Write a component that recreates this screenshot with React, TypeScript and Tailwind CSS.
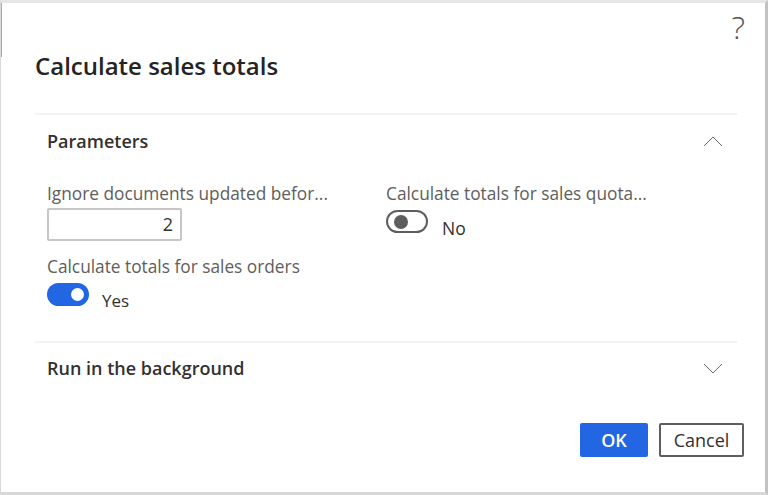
const font = "font-['Open_Sans','Noto_Sans',sans-serif]";

function Toggle({ on }: { on: boolean }) {
  return on ? (
    <span className="flex h-[23px] w-[42px] items-center justify-end rounded-full bg-[#2266e3] pr-[5px]">
      <span className="h-[13px] w-[13px] rounded-full bg-white" />
    </span>
  ) : (
    <span className="flex h-[23px] w-[42px] items-center rounded-full border-2 border-[#605e5c] pl-[6px]">
      <span className="h-[14px] w-[14px] rounded-full bg-[#605e5c]" />
    </span>
  );
}

function Chevron({ up }: { up?: boolean }) {
  return (
    <svg width="20" height="12" viewBox="0 0 20 12" fill="none" className="mr-[14px]">
      <path d={up ? "M1 11 L10 2 L19 11" : "M1 1 L10 10 L19 1"} stroke="#6b6a68" strokeWidth="1" />
    </svg>
  );
}

export default function App() {
  return (
    <div
      className={`relative h-[495px] w-[768px] overflow-hidden border-t-[3px] border-r-[3px] border-b-[3px] border-l border-t-[#e6e6e6] border-r-[#c2c2c2] border-b-[#d8d8d8] border-l-[#d9d9d9] bg-white ${font}`}
    >
      {/* window edges behind the dialog */}
      <div className="absolute left-[-1px] top-0 h-[54px] w-[2px] bg-[#a3abbb]" />
      <div className="absolute bottom-[-3px] left-[613px] h-[3px] w-[154px] bg-[#b9b9b9]" />

      <div className="flex h-full flex-col pl-[34px] pr-[28px]">
        <div className="flex h-[40px] justify-end pt-[6px]">
          <span className="mr-[-8px] text-[32px] font-light leading-[36px] text-[#555]">?</span>
        </div>
        <h1 className="h-[70px] pt-[5px] text-[24px] font-semibold leading-[36px] text-[#252423]">Calculate sales totals</h1>

        <section className="h-[228px] border-t-2 border-[#f3f2f1]">
          <div className="flex h-[52px] items-center justify-between pl-[12px]">
            <span className="text-[18px] font-semibold text-[#323130]">Parameters</span>
            <Chevron up />
          </div>
          <div className="flex pl-[12px] pt-[15px]">
            <div className="w-[339px]">
              <label className="block h-[24px] text-[17.3px] font-medium leading-[24px] text-[#605e5c]">
                Ignore documents updated befor...
              </label>
              <div className="mt-[2px] flex h-[33px] w-[135px] items-center justify-end rounded-[2px] border-2 border-[#c8c6c4] pr-[7px] text-[18px] text-[#323130]">
                2
              </div>
              <label className="mt-[14px] block h-[24px] text-[17.3px] font-medium leading-[24px] text-[#605e5c]">
                Calculate totals for sales orders
              </label>
              <div className="mt-[4px] flex items-start gap-[13px]">
                <Toggle on />
                <span className="mt-[6px] text-[17px] leading-[24px] text-[#323130]">Yes</span>
              </div>
            </div>
            <div>
              <label className="block h-[24px] text-[17.3px] font-medium leading-[24px] text-[#605e5c]">
                Calculate totals for sales quota...
              </label>
              <div className="mt-[4px] flex items-start gap-[14px]">
                <Toggle on={false} />
                <span className="mt-[6px] text-[17.5px] leading-[24px] text-[#323130]">No</span>
              </div>
            </div>
          </div>
        </section>

        <section className="border-t-2 border-[#f3f2f1]">
          <div className="flex h-[51px] items-center justify-between pl-[12px]">
            <span className="text-[18px] font-semibold text-[#323130]">Run in the background</span>
            <Chevron />
          </div>
        </section>

        <div className="mt-[29px] flex justify-end gap-[11px] mr-[-7px]">
          <button className="h-[34px] w-[68px] rounded-[2px] bg-[#2266e3] text-[18px] font-semibold text-white">OK</button>
          <button className="h-[34px] w-[85px] rounded-[2px] border-2 border-[#605e5c] bg-white text-[18px] text-[#323130]">Cancel</button>
        </div>
      </div>
    </div>
  );
}
